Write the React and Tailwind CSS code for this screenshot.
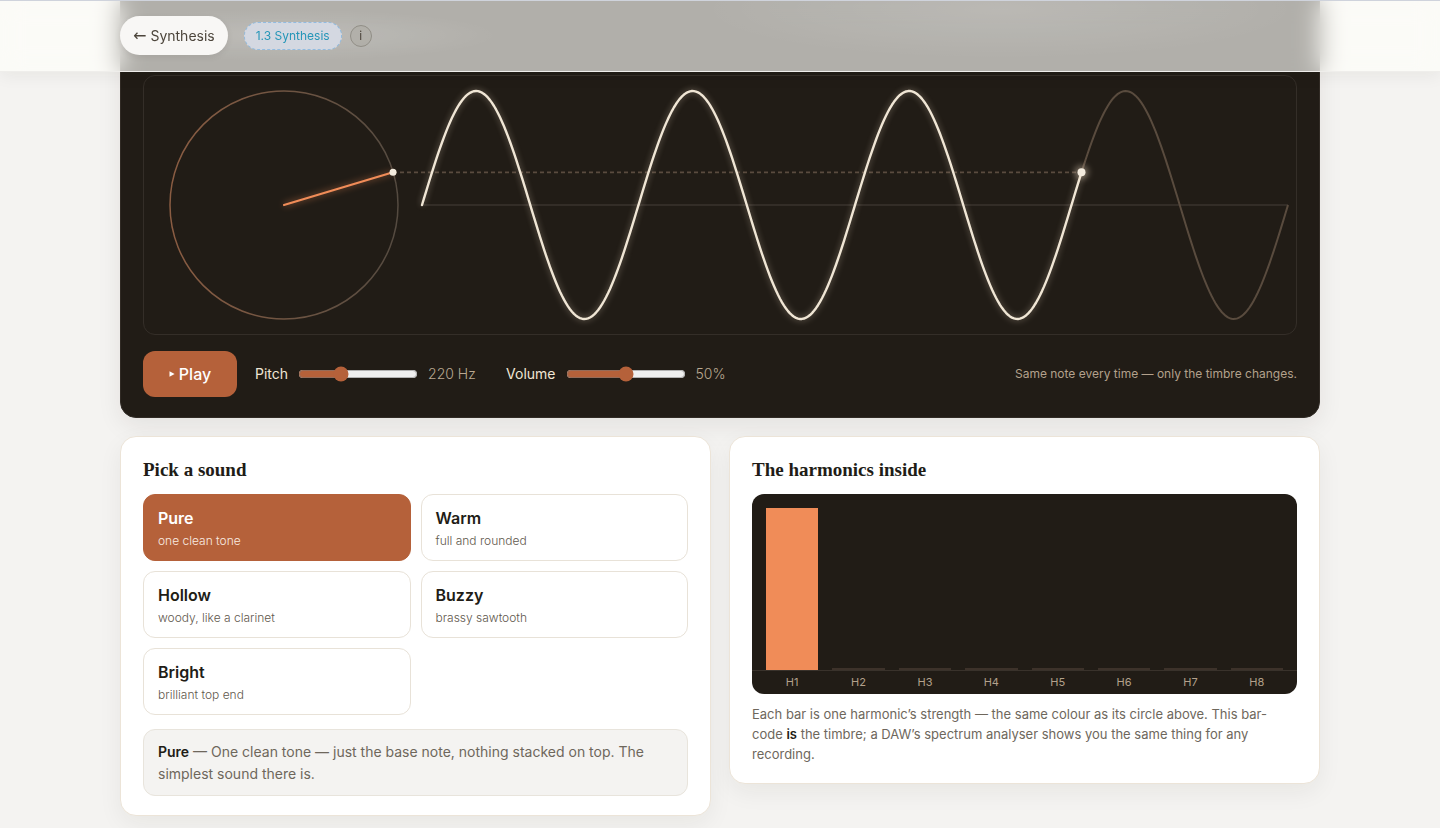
import React, { useState } from "react";

const SOUNDS = [
  { name: "Pure", note: "one clean tone" },
  { name: "Warm", note: "full and rounded" },
  { name: "Hollow", note: "woody, like a clarinet" },
  { name: "Buzzy", note: "brassy sawtooth" },
  { name: "Bright", note: "brilliant top end" },
];

const HARMONICS = [162, 2, 2, 2, 2, 2, 2, 2];

const WAVE_START = 278;
const PERIOD = 216.5;
const MID = 129;
const RADIUS = 114;
const HEAD = 937.5;

function wavePath(from, to) {
  let d = "";
  for (let x = from; x < to + 2; x += 2) {
    const px = Math.min(x, to);
    const y = MID - RADIUS * Math.sin(((px - WAVE_START) / PERIOD) * 2 * Math.PI);
    d += (d ? "L" : "M") + px.toFixed(1) + " " + y.toFixed(2);
  }
  return d;
}

function Scope() {
  return (
    <svg viewBox="0 0 1152 258" className="block h-auto w-full" role="img" aria-label="Rotating circle tracing a sine wave">
      <defs>
        <filter id="glow" filterUnits="userSpaceOnUse" x="0" y="0" width="1152" height="258" colorInterpolationFilters="sRGB">
          <feGaussianBlur stdDeviation="3" />
        </filter>
        <linearGradient id="ring" x1="0" x2="1" y1="0" y2="0">
          <stop offset="0" stopColor="#8a5c42" />
          <stop offset="0.6" stopColor="#6a5342" />
          <stop offset="1" stopColor="#544a40" />
        </linearGradient>
      </defs>
      <line x1="278" y1="129" x2="1144" y2="129" stroke="#332d27" strokeWidth="2" />
      <circle cx="140" cy="129" r="114" fill="none" stroke="url(#ring)" strokeWidth="1.5" />
      <path d={wavePath(HEAD, 1144)} fill="none" stroke="#594b3e" strokeWidth="2" />
      <line x1="249" y1="96.3" x2="937" y2="96.3" stroke="#5a4b3f" strokeWidth="1.8" strokeDasharray="4 3" />
      <path d="M140 129L249 96.3" stroke="#f08c58" strokeWidth="4" opacity="0.35" filter="url(#glow)" />
      <path d="M140 129L249 96.3" stroke="#f08c58" strokeWidth="2.2" strokeLinecap="round" />
      <path d={wavePath(WAVE_START, HEAD)} fill="none" stroke="#f3e0c8" strokeWidth="4" opacity="0.28" filter="url(#glow)" />
      <path d={wavePath(WAVE_START, HEAD)} fill="none" stroke="#f0e6d5" strokeWidth="2.4" strokeLinecap="round" strokeLinejoin="round" />
      <circle cx="249" cy="96.3" r="3.5" fill="#f3ebde" />
      <circle cx="937.5" cy="96.3" r="7" fill="#f3e0c8" opacity="0.4" filter="url(#glow)" />
      <circle cx="937.5" cy="96.3" r="4" fill="#f3ebde" />
    </svg>
  );
}

function Slider({ id, label, min, max, value, onChange, output }) {
  return (
    <div className="flex items-center gap-[10px] text-sm">
      <label htmlFor={id} className="text-[#f0e6d5]">{label}</label>
      <input
        id={id}
        type="range"
        min={min}
        max={max}
        value={value}
        onChange={(e) => onChange(Number(e.target.value))}
        className="w-[120px] accent-[#b5613a]"
      />
      <output htmlFor={id} className="w-[60px] font-light text-[#b9a891]">{output}</output>
    </div>
  );
}

const card = "rounded-2xl border border-[#ece4d8] bg-white px-[22px] pt-[22px] pb-[19px] shadow-[0_8px_24px_rgba(33,28,22,0.06)]";
const heading = "mb-3 font-['Liberation_Serif',serif] text-[19px] leading-[22px] pb-px font-bold";

export default function App() {
  const [pitch, setPitch] = useState(220);
  const [volume, setVolume] = useState(50);
  const [sound, setSound] = useState("Pure");

  return (
    <div className="min-h-screen bg-[#f4f3f1] font-['Inter',sans-serif] text-[#211c16]">
      <header className="sticky top-0 z-10 border-t border-b border-t-[#cfd3dc] border-b-[#efeeeb] bg-[#fffffb]/65 shadow-[0_4px_16px_rgba(33,28,22,0.06)] backdrop-blur-[12px]">
        <div className="mx-auto flex h-[70px] max-w-[1200px] items-center bg-[radial-gradient(ellipse_220px_26px_at_160px_34px,rgba(255,255,255,0.16),transparent),radial-gradient(ellipse_300px_50px_at_880px_8px,rgba(255,255,255,0.12),transparent)] pb-px">
          <a href="#synthesis" className="flex h-[39px] items-center gap-1 rounded-full bg-[#f8f7f5] px-[13px] text-sm text-[#4c453b] shadow-[0_2px_6px_rgba(33,28,22,0.08)]">
            <span className="font-['DejaVu_Sans',sans-serif] text-base leading-5">←</span>
            <span>Synthesis</span>
          </a>
          <span className="ml-4 flex h-7 items-center rounded-full border border-dashed border-[#92bce0] bg-[#d4d8e1] px-[11px] text-xs text-[#2596b8]">
            1.3 Synthesis
          </span>
          <button type="button" aria-label="About this lesson" className="ml-2 flex size-[22px] items-center justify-center rounded-full border border-[#928f87] bg-[#adaba5]/60 text-xs text-[#4c453b]">
            i
          </button>
        </div>
      </header>

      <main className="mx-auto -mt-5 flex max-w-[1200px] flex-col gap-[18px] pb-3">
        <section className="-mt-20 rounded-2xl border border-[#312b25] bg-[#211c16] px-[22px] pt-[102px] pb-5 shadow-[0_8px_24px_rgba(33,28,22,0.08)]">
          <div className="overflow-hidden rounded-xl border border-[#342e28]">
            <Scope />
          </div>
          <div className="mt-4 flex flex-wrap items-center gap-[18px]">
            <button type="button" className="flex h-[46px] w-[94px] items-center justify-center gap-1 rounded-xl bg-[#b5613a] text-base font-medium text-white">
              <svg viewBox="0 0 6 6" className="size-[6px]" aria-hidden="true">
                <path d="M0.5 0.3L5.6 3L0.5 5.7Z" fill="currentColor" />
              </svg>
              Play
            </button>
            <Slider id="pitch" label="Pitch" min={110} max={440} value={pitch} onChange={setPitch} output={`${pitch} Hz`} />
            <Slider id="volume" label="Volume" min={0} max={100} value={volume} onChange={setVolume} output={`${volume}%`} />
            <p className="ml-auto text-xs text-[#b3a18c]">Same note every time — only the timbre changes.</p>
          </div>
        </section>

        <div className="grid grid-cols-1 items-start gap-[18px] md:grid-cols-2">
          <section className={card}>
            <h2 className={heading}>Pick a sound</h2>
            <div className="grid grid-cols-2 gap-[10px]">
              {SOUNDS.map((s) => {
                const on = s.name === sound;
                return (
                  <button
                    key={s.name}
                    type="button"
                    aria-pressed={on}
                    onClick={() => setSound(s.name)}
                    className={
                      "flex flex-col gap-[3px] rounded-xl border px-[14px] pt-[13px] pb-[9px] text-left " +
                      (on ? "border-[#b5613a] bg-[#b5613a] text-white" : "border-[#e8e2d8] bg-white")
                    }
                  >
                    <span className="text-base leading-5 font-semibold">{s.name}</span>
                    <span className={on ? "text-xs leading-5 font-light text-[#f9ece3]" : "text-xs leading-5 font-light text-[#5f584d]"}>{s.note}</span>
                  </button>
                );
              })}
            </div>
            <p className="mt-[14px] rounded-xl border border-[#e8e4dc] bg-[#f4f3f1] px-[14px] pt-[11px] pb-[10px] text-sm leading-[22px] text-[#6e675c]">
              <strong className="font-semibold text-[#211c16]">Pure</strong> — One clean tone — just the base note, nothing stacked on top. The simplest sound there is.
            </p>
          </section>

          <section className={card}>
            <h2 className={heading}>The harmonics inside</h2>
            <div className="overflow-hidden rounded-xl bg-[#211c16]">
              <div className="flex h-[177px] items-end gap-[14px] border-b border-[#39322b] px-[14px]">
                {HARMONICS.map((h, i) => (
                  <div key={i} className={i === 0 ? "flex-1 bg-[#f08c58]" : "flex-1 bg-[#3d322a]"} style={{ height: h }} />
                ))}
              </div>
              <div className="flex h-[23px] gap-[14px] px-[14px] text-center text-[11px] leading-[22px] text-[#b3a18c]">
                {HARMONICS.map((h, i) => (
                  <span key={i} className="flex-1">H{i + 1}</span>
                ))}
              </div>
            </div>
            <p className="mt-[10px] text-[13px] leading-5 text-[#6e675c]">
              Each bar is one harmonic’s strength — the same colour as its circle above. This bar-code{" "}
              <strong className="font-semibold text-[#211c16]">is</strong> the timbre; a DAW’s spectrum analyser shows you the same thing for any recording.
            </p>
          </section>
        </div>
      </main>
    </div>
  );
}
